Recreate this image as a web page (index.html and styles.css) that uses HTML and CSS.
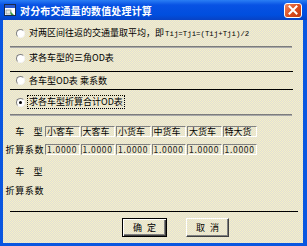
FILE: index.html
```html
<!DOCTYPE html>
<html lang="zh-CN">
<head>
  <meta charset="UTF-8">
  <title>对分布交通量的数值处理计算</title>
  <link rel="stylesheet" href="styles.css">
</head>
<body>
  <div class="window">
    <div class="titlebar">
      <svg class="app-icon" width="12" height="12" viewBox="0 0 12 12">
        <rect x="0.5" y="0.5" width="11" height="11" fill="#fff" stroke="#1a2a4a"/>
        <rect x="1" y="1" width="10" height="3" fill="#2a5ad0"/>
        <rect x="2" y="6" width="5" height="4" fill="#e8e8e0" stroke="#6a7a8a" stroke-width="0.6"/>
        <path d="M6 7 L10 11 L7 11 Z" fill="#3aa040"/>
      </svg>
      <span class="title">对分布交通量的数值处理计算</span>
      <a class="close">
        <svg width="10" height="10" viewBox="0 0 10 10">
          <path d="M1.5 1.5 L8.5 8.5 M8.5 1.5 L1.5 8.5" stroke="#fff" stroke-width="2" stroke-linecap="square"/>
        </svg>
      </a>
    </div>

    <div class="client">
      <div class="opt opt1">
        <span class="radio"></span>
        <span>对两区间往返的交通量取平均，即<span class="mono">Tij=Tji=(Tij+Tji)/2</span></span>
      </div>
      <div class="sep"></div>
      <div class="opt opt2">
        <span class="radio"></span>
        <span>求各车型的三角OD表</span>
      </div>
      <div class="line"></div>
      <div class="opt opt3">
        <span class="radio"></span>
        <span>各车型OD表 乘系数</span>
      </div>
      <div class="line"></div>
      <div class="opt opt4">
        <span class="radio on"></span>
        <span class="focus">求各车型折算合计OD表</span>
      </div>
      <div class="sep"></div>

      <div class="grid">
        <div class="label wide-gap">车 型</div>
        <div class="cell">小客车</div>
        <div class="cell">大客车</div>
        <div class="cell">小货车</div>
        <div class="cell">中货车</div>
        <div class="cell">大货车</div>
        <div class="cell">特大货</div>

        <div class="label">折算系数</div>
        <div class="cell num">1.0000</div>
        <div class="cell num">1.0000</div>
        <div class="cell num">1.0000</div>
        <div class="cell num">1.0000</div>
        <div class="cell num">1.0000</div>
        <div class="cell num">1.0000</div>

        <div class="label wide-gap row3">车 型</div>
        <div class="label row4">折算系数</div>
      </div>

      <div class="line bottom"></div>

      <div class="buttons">
        <a class="btn default">确 定</a>
        <a class="btn">取 消</a>
      </div>
    </div>
  </div>
</body>
</html>
```

FILE: styles.css
```css
* { margin: 0; padding: 0; box-sizing: border-box; }
body {
  font-family: "Noto Sans CJK SC", "Liberation Sans", sans-serif;
  font-size: 9px;
  color: #000;
  background: #fff;
}

.window { width: 307px; height: 246px; display: flex; flex-direction: column; background: #0a56e0; }

/* title bar */
.titlebar {
  height: 20px;
  display: flex;
  align-items: center;
  padding: 0 5px 0 4px;
  background: linear-gradient(#2a7ef4, #0852e4 25%, #004ede 75%, #0842c4);
}
.app-icon { flex: none; margin-right: 4px; }
.title { color: #fff; font-weight: bold; font-size: 10px; letter-spacing: 0.15px; flex: 1; }
.close {
  width: 18px; height: 15px;
  display: flex; align-items: center; justify-content: center;
  border: 1px solid #fff;
  border-radius: 3px;
  background: linear-gradient(135deg, #f08860, #dc4a1c 55%, #c03a10);
}

/* client area */
.client {
  flex: 1;
  display: flex;
  flex-direction: column;
  border-left: 3px solid #0a56e0;
  border-right: 4px solid #0a56e0;
  border-bottom: 3px solid #0a56e0;
  background: repeating-conic-gradient(#f6f0c6 0 25%, #e0ded6 0 50%) 0 0 / 2px 2px;
}

.opt { display: flex; align-items: center; padding-left: 13px; line-height: 12px; }
.opt1 { height: 26px; }
.opt2 { height: 23px; padding-bottom: 3px; }
.opt3 { height: 17px; }
.opt4 { height: 24px; }

.radio {
  width: 9px; height: 9px;
  margin-right: 4px;
  border-radius: 50%;
  border: 1px solid;
  border-color: #808080 #f4f4f4 #f4f4f4 #808080;
  background: #fff;
  flex: none;
  position: relative;
}
.radio.on::after {
  content: "";
  position: absolute;
  left: 2px; top: 2px;
  width: 3px; height: 3px;
  border-radius: 50%;
  background: #000;
}
.focus { outline: 1px dotted #000; outline-offset: 0; padding: 0 1px; margin-left: -1px; }
.mono { font-family: "Liberation Mono", monospace; font-size: 7.4px; margin-left: 1px; }

.sep { height: 2px; margin: 0 11px 0 7px; border-top: 1px solid #7c7c7c; border-bottom: 1px solid #a8a8a8; }
.line { height: 1px; margin: 0 7px 0 7px; background: #000; width: 283px; }
.line.bottom { width: 288px; }

/* coefficients grid */
.grid {
  display: grid;
  grid-template-columns: 42px repeat(6, 35.5px);
  grid-template-rows: 18px 22px 19px 26px;
  align-items: start;
  padding-top: 10px;
  height: 95px;
}
.label { height: 12px; line-height: 12px; text-align: right; padding-right: 1px; letter-spacing: 0.6px; white-space: nowrap; }
.wide-gap { word-spacing: 6px; padding-right: 2px; }
.row3 { grid-column: 1; grid-row: 3; }
.row4 { grid-column: 1; grid-row: 4; }
.cell {
  height: 11px;
  margin-right: 1px;
  line-height: 9px;
  padding-left: 1px;
  border: 1px solid;
  border-color: #808080 #fff #fff #808080;
  white-space: nowrap;
  overflow: hidden;
}
.cell.num { font-size: 8.5px; letter-spacing: 0.7px; color: #202020; }

/* buttons */
.buttons { display: flex; gap: 19px; padding: 6px 0 0 119px; }
.btn {
  height: 19px;
  width: 43px;
  display: flex; align-items: center; justify-content: center;
  border: 1px solid;
  border-color: #fff #404040 #404040 #fff;
  box-shadow: inset -1px -1px 0 #808080;
  word-spacing: 3px;
}
.btn.default { width: 45px; border: 1px solid #000; box-shadow: inset 1px 1px 0 #fff, inset -1px -1px 0 #404040, inset -2px -2px 0 #808080; }
```
